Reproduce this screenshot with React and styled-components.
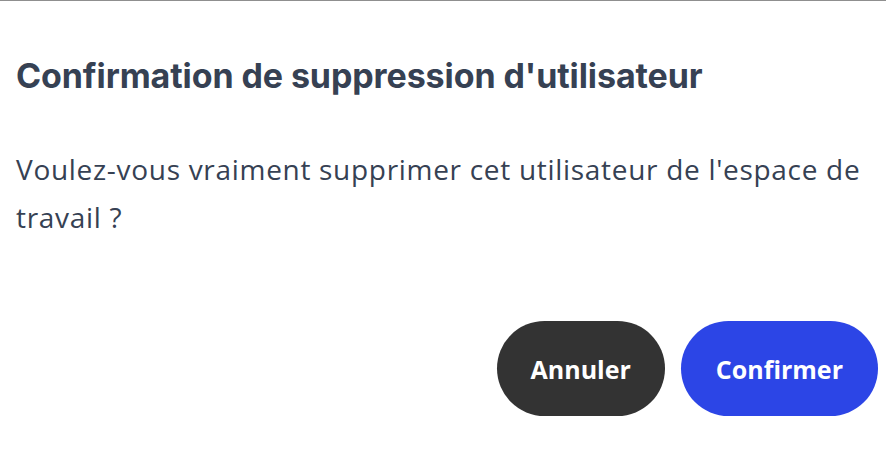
import React from 'react';
import styled, { createGlobalStyle } from 'styled-components';

const GlobalStyle = createGlobalStyle`
  html, body {
    margin: 0;
    padding: 0;
    background: #ffffff;
  }
`

const Dialog = styled.div`
  box-sizing: border-box;
  width: 886px;
  height: 460px;
  border-top: 1px solid #8f8f8f;
  padding: 54px 8px 0 16px;
  display: flex;
  flex-direction: column;
`

const Title = styled.h2`
  margin: 0;
  font-family: Inter, "Liberation Sans", sans-serif;
  font-weight: 700;
  font-size: 34px;
  line-height: 42px;
  letter-spacing: -0.1px;
  color: #364153;
`

const Message = styled.p`
  margin: 48px 0 0;
  font-family: "Open Sans", Lato, sans-serif;
  font-weight: 500;
  font-size: 28px;
  line-height: 48px;
  letter-spacing: 0.7px;
  color: #364153;
`

const Actions = styled.div`
  margin-top: 80px;
  display: flex;
  justify-content: flex-end;
  gap: 16px;
`

const Button = styled.button`
  height: 95px;
  padding: 0 ${p => (p.$primary ? '35px' : '34px')};
  border: none;
  border-radius: 48px;
  background: ${p => (p.$primary ? '#2c45e6' : '#333333')};
  color: #ffffff;
  font-family: "Open Sans", Lato, sans-serif;
  font-weight: 700;
  font-size: 25px;
  cursor: pointer;
`

export default function App() {
  return (
    <>
      <GlobalStyle />
      <Dialog>
        <Title>Confirmation de suppression d'utilisateur</Title>
        <Message>
          Voulez-vous vraiment supprimer cet utilisateur de l'espace de travail ?
        </Message>
        <Actions>
          <Button>Annuler</Button>
          <Button $primary>Confirmer</Button>
        </Actions>
      </Dialog>
    </>
  );
}
